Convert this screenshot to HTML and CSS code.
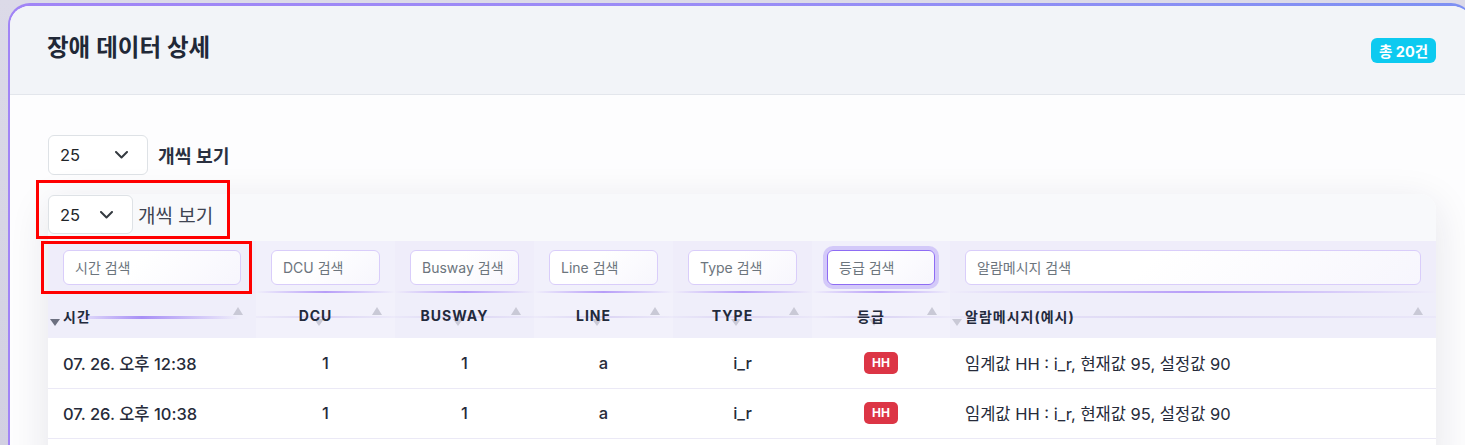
FILE: index.html
```html
<!DOCTYPE html>
<html lang="ko">
<head>
<meta charset="utf-8">
<title>장애 데이터 상세</title>
<link rel="stylesheet" href="styles.css">
</head>
<body>
<div class="card">
  <div class="card-header">
    <h2 class="title">장애 데이터 상세</h2>
    <span class="count-badge">총 20건</span>
  </div>
  <div class="card-body">
    <div class="length-row">
      <div class="select select-lg">
        <span>25</span>
        <svg class="chev" width="13" height="8" viewBox="0 0 13 8"><path d="M1 1l5.5 5.5L12 1" fill="none" stroke="#343a40" stroke-width="2" stroke-linecap="round" stroke-linejoin="round"/></svg>
      </div>
      <span class="length-label strong">개씩 보기</span>
    </div>

    <div class="table-wrap">
      <div class="length-row inner">
        <div class="select select-sm">
          <span>25</span>
          <svg class="chev" width="13" height="8" viewBox="0 0 13 8"><path d="M1 1l5.5 5.5L12 1" fill="none" stroke="#343a40" stroke-width="2" stroke-linecap="round" stroke-linejoin="round"/></svg>
        </div>
        <span class="length-label">개씩 보기</span>
      </div>

      <table class="data-table">
        <colgroup>
          <col class="c-time"><col class="c-mid"><col class="c-mid"><col class="c-mid"><col class="c-mid"><col class="c-grade"><col class="c-msg">
        </colgroup>
        <thead>
          <tr class="filter-row">
            <th><input type="text" placeholder="시간 검색"></th>
            <th><input type="text" placeholder="DCU 검색"></th>
            <th><input type="text" placeholder="Busway 검색"></th>
            <th><input type="text" placeholder="Line 검색"></th>
            <th><input type="text" placeholder="Type 검색"></th>
            <th><input type="text" class="is-focused" placeholder="등급 검색"></th>
            <th><input type="text" placeholder="알람메시지 검색"></th>
          </tr>
          <tr class="head-row">
            <th class="left sorted"><span>시간</span></th>
            <th><span>DCU</span></th>
            <th><span>BUSWAY</span></th>
            <th><span>LINE</span></th>
            <th><span>TYPE</span></th>
            <th><span>등급</span></th>
            <th class="left"><span>알람메시지(예시)</span></th>
          </tr>
        </thead>
        <tbody>
          <tr class="row-new">
            <td class="left">07. 26. 오후 12:38</td>
            <td>1</td>
            <td>1</td>
            <td>a</td>
            <td>i_r</td>
            <td><span class="grade">HH</span></td>
            <td class="left msg">임계값 HH : i_r, 현재값 95, 설정값 90</td>
          </tr>
          <tr>
            <td class="left">07. 26. 오후 10:38</td>
            <td>1</td>
            <td>1</td>
            <td>a</td>
            <td>i_r</td>
            <td><span class="grade">HH</span></td>
            <td class="left msg">임계값 HH : i_r, 현재값 95, 설정값 90</td>
          </tr>
        </tbody>
      </table>

      <div class="mark mark-length"></div>
      <div class="mark mark-filter"></div>
    </div>
  </div>
</div>
</body>
</html>
```

FILE: styles.css
```css
* {
  box-sizing: border-box;
}

html,
body {
  margin: 0;
}

body {
  height: 445px;
  overflow: hidden;
  padding: 3px 0 0 8px;
  background: linear-gradient(180deg, #dcdae8, #d2d0e2);
  font-family: "Inter", "Noto Sans CJK KR", sans-serif;
  color: #212837;
}

.card {
  min-height: 442px;
  margin-right: -8px;
  border-style: solid;
  border-color: transparent;
  border-width: 3px 0 0 2px;
  border-radius: 22px 22px 0 0;
  background:
    linear-gradient(#fdfdfe, #fdfdfe) padding-box,
    linear-gradient(90deg, #a184f6, #9a8cf6 50%, #7d90f3) border-box;
  overflow: hidden;
}

.card-header {
  display: flex;
  align-items: center;
  justify-content: space-between;
  height: 89px;
  padding: 0 37px 4px 37px;
  background: #f2f4f8;
  border-bottom: 1px solid #e3e6ec;
}

.title {
  margin: 0;
  font-size: 23.5px;
  font-weight: 600;
  line-height: 1.3;
  color: #212837;
}

.count-badge {
  display: inline-flex;
  align-items: center;
  height: 25px;
  padding: 0 8px;
  border-radius: 6px;
  background: #0dcaf0;
  color: #fff;
  font-size: 14.5px;
  font-weight: 700;
  margin-top: 4px;
}

.card-body {
  padding: 40px 37px 0 38px;
}

.length-row {
  display: flex;
  align-items: center;
  gap: 10px;
}

.select {
  display: flex;
  align-items: center;
  justify-content: space-between;
  height: 40px;
  padding: 0 19px 0 11px;
  border: 1px solid #dee2e6;
  border-radius: 6px;
  background: #fff;
  font-size: 16.5px;
  color: #212529;
}

.select-lg {
  width: 100px;
}

.select-sm {
  width: 85px;
  height: 39px;
}

.length-label {
  font-size: 19px;
  color: #3e4452;
}

.length-label.strong {
  font-size: 18.2px;
  font-weight: 600;
  color: #2a3040;
}

.table-wrap {
  position: relative;
  min-height: 280px;
  margin-top: 19px;
  padding-top: 1px;
  background: linear-gradient(180deg, #f8f9fb 0, #f8f9fb 47px, #ffffff 47px);
  border-radius: 16px 16px 0 0;
  box-shadow: 0 10px 40px rgba(30, 30, 60, 0.11);
}

.length-row.inner {
  gap: 5px;
}

.data-table {
  width: 100%;
  margin-top: 7px;
  border-collapse: collapse;
  table-layout: fixed;
}

.c-time { width: 208px; }
.c-mid { width: 139px; }
.c-grade { width: 138px; }
.c-msg { width: 486px; }

.filter-row th {
  position: relative;
  height: 52px;
  padding: 9px 15px 8px;
  background: #efedfa;
}

.filter-row th:nth-child(even) {
  background: #f1f0fb;
}

.filter-row th::after {
  content: "";
  position: absolute;
  left: 0;
  right: 0;
  bottom: 0;
  height: 2px;
  background: linear-gradient(90deg, rgba(183, 157, 248, 0), #b79df8 50%, rgba(183, 157, 248, 0));
}

.filter-row input {
  display: block;
  width: 100%;
  height: 35px;
  padding: 0 11px;
  border: 1px solid #d9cdfa;
  border-radius: 6px;
  background: linear-gradient(135deg, #ffffff 40%, #f7f6fd);
  font-family: inherit;
  font-size: 14px;
  color: #212529;
  outline: none;
}

.filter-row input::placeholder {
  color: #6c757d;
}

.filter-row input.is-focused {
  border-color: #8e6cf4;
  box-shadow: 0 0 0 4px rgba(176, 152, 246, 0.45);
}

.head-row th {
  position: relative;
  height: 45px;
  padding: 0 35px 0 15px;
  font-size: 14px;
  font-weight: 700;
  letter-spacing: 1px;
  color: #232a3c;
  text-align: center;
  background-color: #efeefa;
  background-image: linear-gradient(90deg, rgba(215, 207, 243, 0.2), #dcd5f4 50%, rgba(215, 207, 243, 0.2));
  background-repeat: no-repeat;
  background-size: 100% 2px;
  background-position: 0 23px;
}

.head-row th:nth-child(even) {
  background-color: #f2f1fb;
}

.head-row th.left {
  text-align: left;
  padding-right: 15px;
}

.head-row th span {
  position: relative;
  z-index: 1;
}

.head-row th::before {
  content: "";
  position: absolute;
  right: 13px;
  top: 14px;
  border-left: 5.5px solid transparent;
  border-right: 5.5px solid transparent;
  border-bottom: 8px solid #c9c9d6;
}

.head-row th::after {
  content: "";
  position: absolute;
  left: calc(50% - 12px);
  top: 26px;
  border-left: 5px solid transparent;
  border-right: 5px solid transparent;
  border-top: 7px solid #c9c9d6;
}

.head-row th.left::after {
  left: 2px;
}

.head-row th.sorted {
  background-image: linear-gradient(90deg, rgba(167, 139, 250, 0) 10%, #a88ff6 45%, rgba(167, 139, 250, 0) 92%);
  background-size: 100% 3px;
  background-position: 0 23px;
}

.head-row th.sorted::after {
  border-top-color: #6c7080;
}

.data-table tbody td {
  height: 50px;
  padding: 0 15px;
  background: #fff;
  border-bottom: 1px solid #ebe9f6;
  font-size: 16.5px;
  font-weight: 500;
  color: #262b3a;
  text-align: center;
  white-space: nowrap;
}

.data-table tbody td.left {
  text-align: left;
}

.data-table tbody td.msg {
  font-weight: 400;
}

.row-new td {
  font-weight: 600;
  color: #1c2130;
}

.row-new td.msg {
  font-weight: 500;
}

.grade {
  display: inline-block;
  height: 22px;
  padding: 0 8px;
  border-radius: 5px;
  background: #dc3545;
  color: #fff;
  font-size: 12px;
  font-weight: 700;
  line-height: 22px;
  vertical-align: middle;
}

.mark {
  position: absolute;
  border: 3px solid #ff0000;
  pointer-events: none;
}

.mark-length {
  left: -12px;
  top: -14px;
  width: 194px;
  height: 59px;
}

.mark-filter {
  left: -7px;
  top: 47px;
  width: 211px;
  height: 53px;
}
```
